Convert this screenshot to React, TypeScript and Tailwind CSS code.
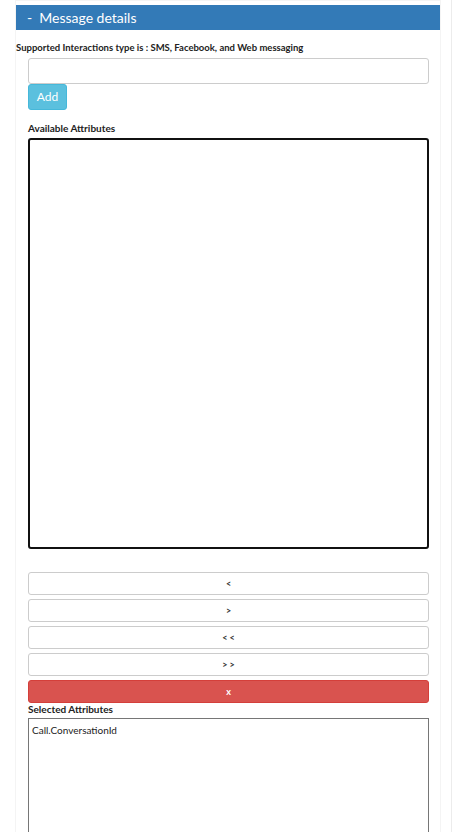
import React from 'react';

const FONT = { fontFamily: 'Lato, "Open Sans", sans-serif' };

function MoveButton({ label, danger }: { label: string; danger?: boolean }) {
  return (
    <button
      className={
        danger
          ? 'h-[23px] w-full rounded-[3px] border border-[#d43f3a] bg-[#d9534f] text-[9px] font-bold text-white leading-none'
          : 'h-[23px] w-full rounded-[3px] border border-[#ccc] bg-white text-[9px] font-bold text-[#333] leading-none'
      }
    >
      {label}
    </button>
  );
}

export default function App() {
  return (
    <div className="min-h-[832px] w-[460px] bg-white" style={FONT}>
      <div className="min-h-[832px] w-[452px] border-r border-[#ececec]">
        <div className="ml-[15px] min-h-[832px] w-[426px] border-x border-t border-[#f4f4f4] pt-[4px]">
          {/* Panel header */}
          <div className="flex h-[25px] items-center bg-[#337ab7] pl-[11px] text-[14px] text-white">
            <span className="mr-[7px]">-</span>
            <span>Message details</span>
          </div>

          <div className="pt-[10px] text-[9.5px] font-bold leading-[15px] text-[#222]">
            Supported Interactions type is : SMS, Facebook, and Web messaging
          </div>

          <div className="pl-[12px] pr-[11px]">
            <input className="mt-[3px] block h-[26px] w-full rounded-[3px] border border-[#ccc] px-2 text-[11px] outline-none" />
            <button className="block h-[26px] w-[39px] rounded-[3px] border border-[#46b8da] bg-[#5bc0de] text-[12px] text-white">
              Add
            </button>

            <div className="mt-[11px] text-[10px] font-bold text-[#222]">Available Attributes</div>
            <div className="mt-[2px] h-[411px] w-full rounded-[3px] border-2 border-[#111]" />

            <div className="mt-[23px] flex flex-col gap-[4px]">
              <MoveButton label="<" />
              <MoveButton label=">" />
              <MoveButton label="< <" />
              <MoveButton label="> >" />
              <MoveButton label="x" danger />
            </div>

            <div className="text-[10px] font-bold leading-[13px] text-[#222]">Selected Attributes</div>
            <div className="mt-[2px] h-[140px] w-full border border-[#767676] px-[3px] pt-[4px] text-[10px] text-[#222]">
              Call.ConversationId
            </div>
          </div>
        </div>
      </div>
    </div>
  );
}
